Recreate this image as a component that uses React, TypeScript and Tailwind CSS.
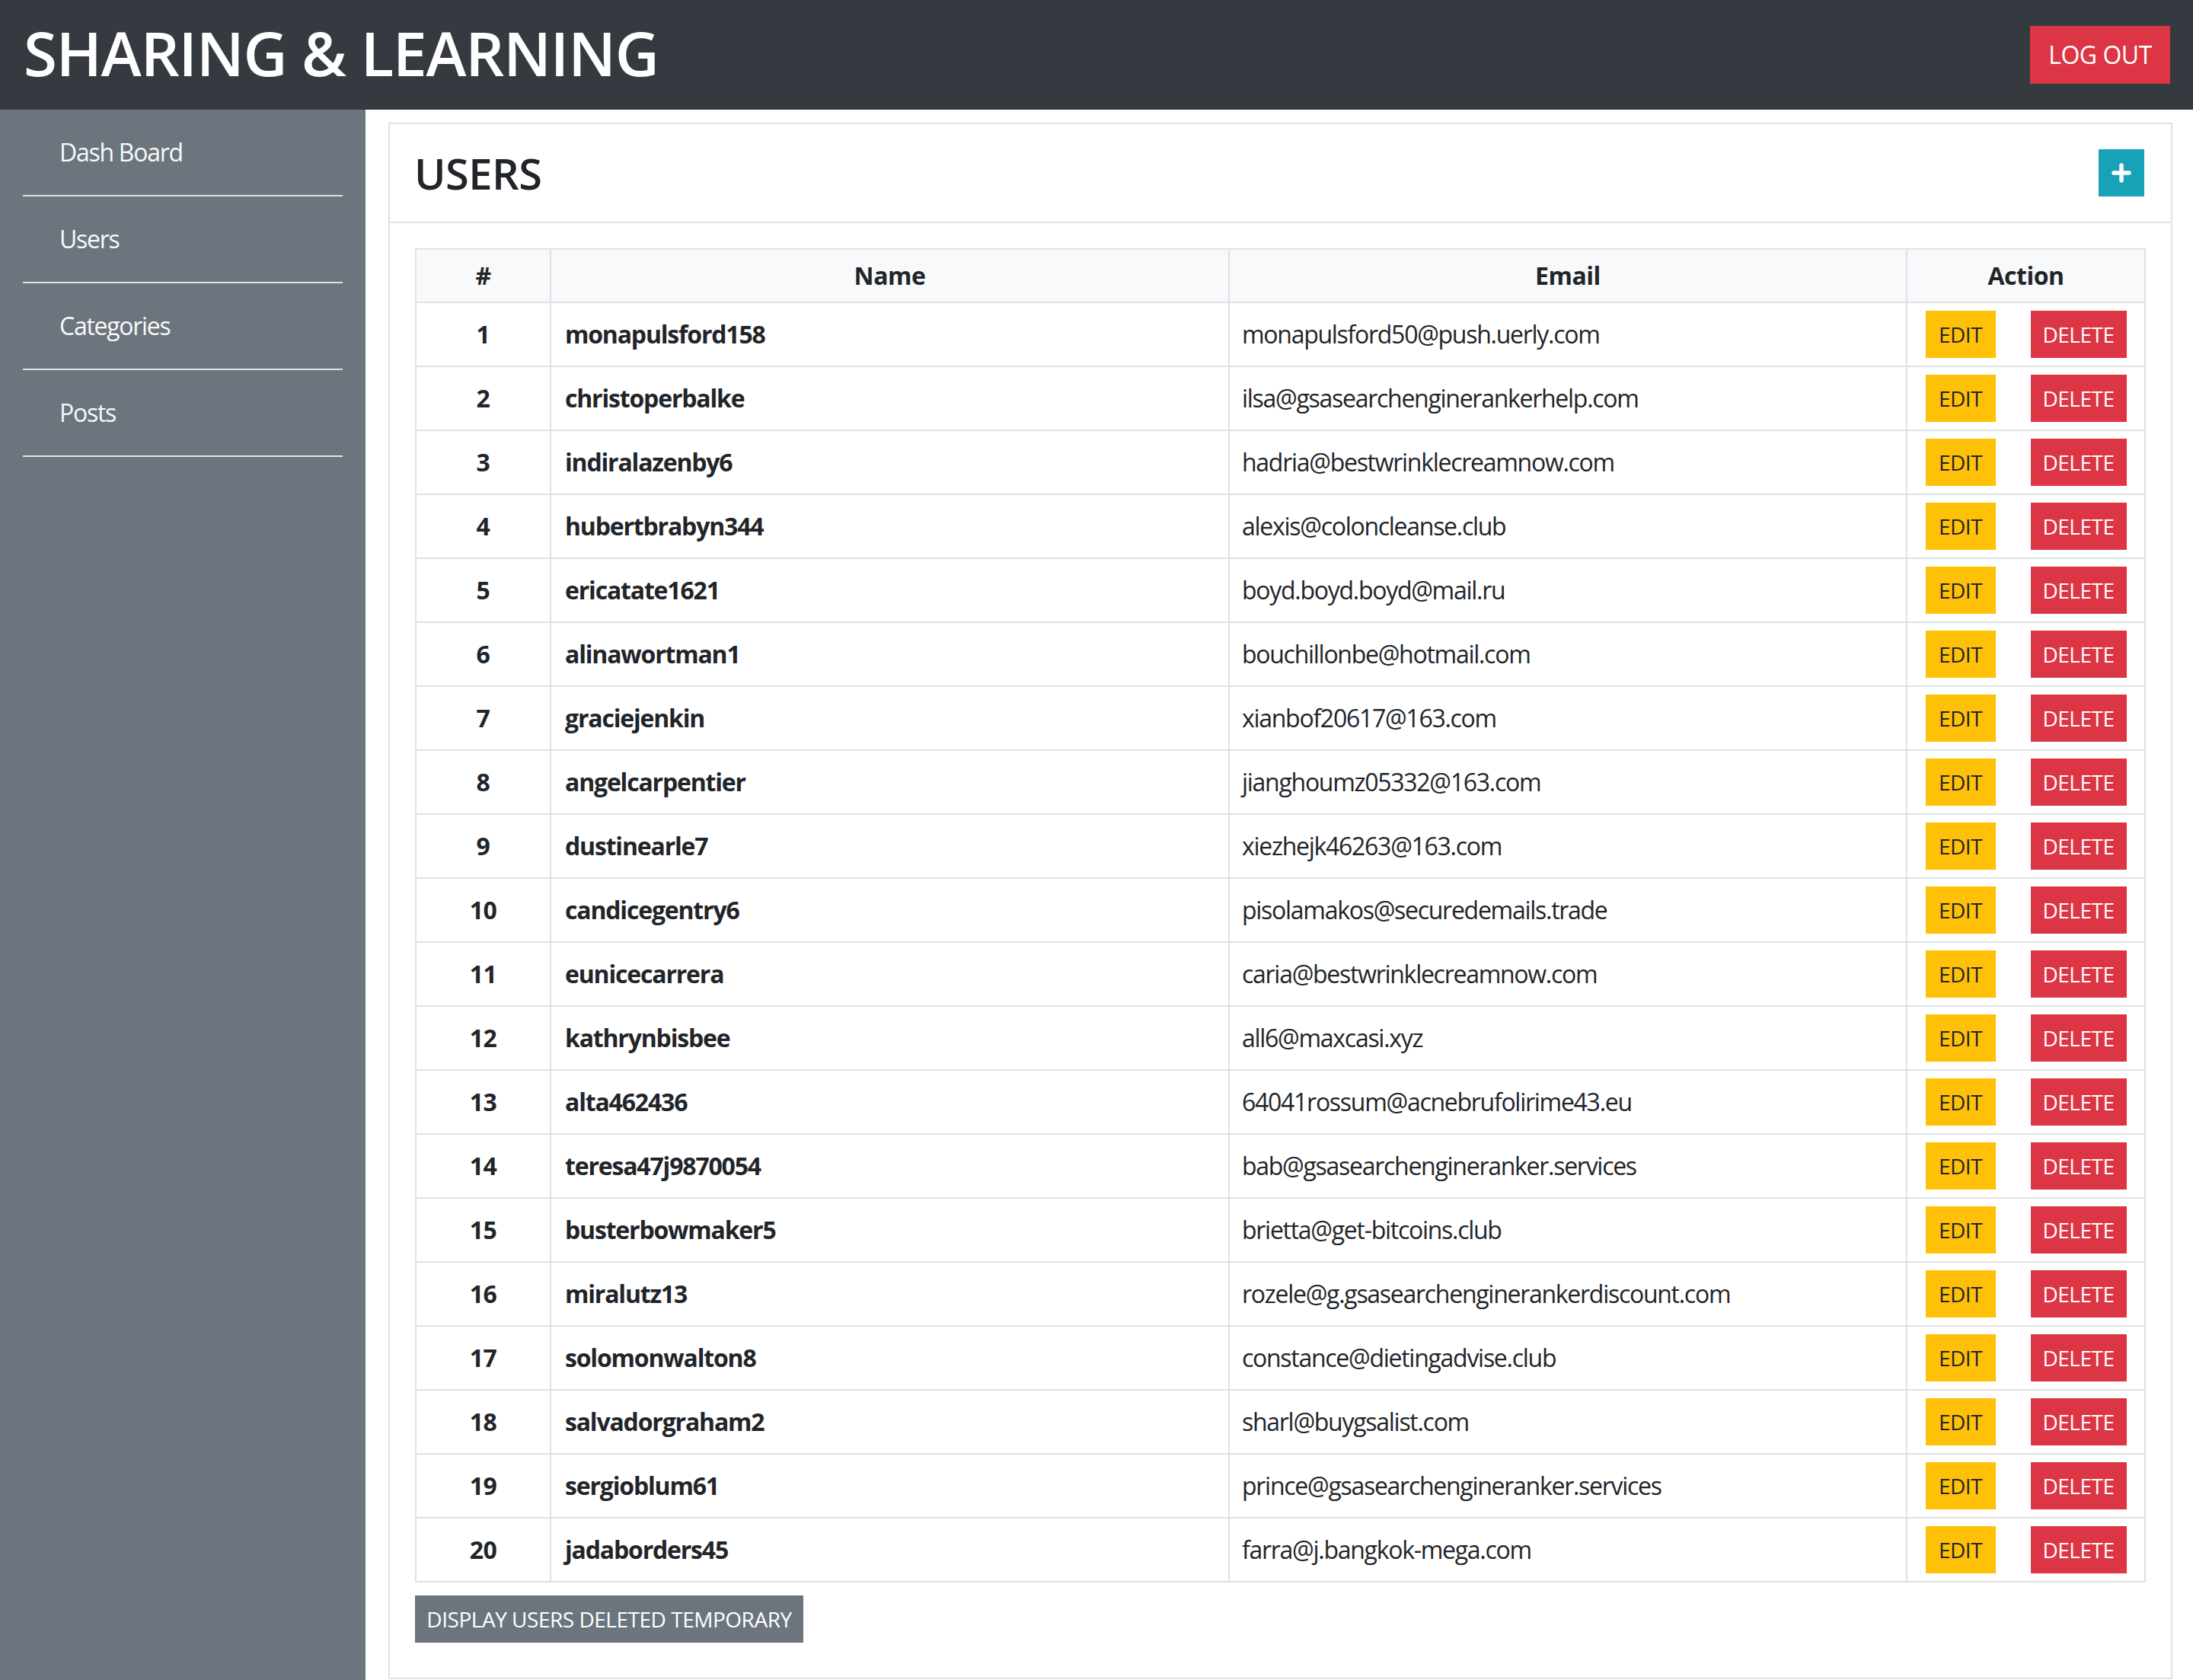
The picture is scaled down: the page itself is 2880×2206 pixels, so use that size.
import React from "react";

const users: [string, string][] = [
  ["monapulsford158", "monapulsford50@push.uerly.com"],
  ["christoperbalke", "ilsa@gsasearchenginerankerhelp.com"],
  ["indiralazenby6", "hadria@bestwrinklecreamnow.com"],
  ["hubertbrabyn344", "alexis@coloncleanse.club"],
  ["ericatate1621", "boyd.boyd.boyd@mail.ru"],
  ["alinawortman1", "bouchillonbe@hotmail.com"],
  ["graciejenkin", "xianbof20617@163.com"],
  ["angelcarpentier", "jianghoumz05332@163.com"],
  ["dustinearle7", "xiezhejk46263@163.com"],
  ["candicegentry6", "pisolamakos@securedemails.trade"],
  ["eunicecarrera", "caria@bestwrinklecreamnow.com"],
  ["kathrynbisbee", "all6@maxcasi.xyz"],
  ["alta462436", "64041rossum@acnebrufolirime43.eu"],
  ["teresa47j9870054", "bab@gsasearchengineranker.services"],
  ["busterbowmaker5", "brietta@get-bitcoins.club"],
  ["miralutz13", "rozele@g.gsasearchenginerankerdiscount.com"],
  ["solomonwalton8", "constance@dietingadvise.club"],
  ["salvadorgraham2", "sharl@buygsalist.com"],
  ["sergioblum61", "prince@gsasearchengineranker.services"],
  ["jadaborders45", "farra@j.bangkok-mega.com"],
];

const nav = ["Dash Board", "Users", "Categories", "Posts"];

export default function App() {
  return (
    <div className="h-[2206px] w-[2880px] overflow-hidden bg-white font-['Open_Sans','Noto_Sans',sans-serif] tracking-[-0.03em] text-[#212529]">
      <header className="flex h-[144px] items-center justify-between bg-[#343a40] pl-[31px] pr-[30px]">
        <h1 className="mb-[6px] text-[80px] font-semibold leading-none tracking-[-0.014em] text-white">
          SHARING &amp; LEARNING
        </h1>
        <button className="flex h-[76px] w-[184px] items-center justify-center bg-[#dc3545] text-[32px] leading-none text-white">
          LOG OUT
        </button>
      </header>
      <div className="flex h-[2062px]">
        <aside className="w-[480px] shrink-0 bg-[#6c757d] px-[30px]">
          {nav.map((n) => (
            <div
              key={n}
              className="flex h-[114px] items-center border-b-2 border-[#dee2e6] pl-[48px] text-[32px] tracking-[-0.04em] text-[#f8f9fa]"
            >
              {n}
            </div>
          ))}
        </aside>
        <main className="flex-1 px-[30px] pt-[17px]">
          <div className="border-2 border-[#dee2e6] bg-white">
            <div className="flex h-[130px] items-center justify-between border-b-2 border-[#dee2e6] pl-[32px] pr-[35px]">
              <h3 className="text-[56px] font-semibold leading-none tracking-[-0.01em]">USERS</h3>
              <button className="flex h-[62px] w-[60px] items-center justify-center bg-[#17a2b8]">
                <svg width="26" height="26" viewBox="0 0 26 26">
                  <path d="M13 3v20M3 13h20" stroke="white" strokeWidth="5.5" strokeLinecap="round" fill="none" />
                </svg>
              </button>
            </div>
            <div className="px-[33px] pb-[46px] pt-[33px]">
              <table className="w-full table-fixed border-collapse text-[32px]">
                <colgroup>
                  <col className="w-[177px]" />
                  <col className="w-[891px]" />
                  <col className="w-[890px]" />
                  <col className="w-[313px]" />
                </colgroup>
                <thead>
                  <tr className="h-[70px] bg-[#f8f9fa]">
                    <th className="border-2 border-[#dee2e6] text-center font-bold">#</th>
                    <th className="border-2 border-[#dee2e6] text-center font-bold">Name</th>
                    <th className="border-2 border-[#dee2e6] text-center font-bold">Email</th>
                    <th className="border-2 border-[#dee2e6] text-center font-bold">Action</th>
                  </tr>
                </thead>
                <tbody>
                  {users.map(([name, email], i) => (
                    <tr key={name} className="h-[84px]">
                      <td className="border-2 border-[#dee2e6] text-center font-bold">{i + 1}</td>
                      <td className="border-2 border-[#dee2e6] px-[18px] font-bold tracking-[-0.037em]">{name}</td>
                      <td className="border-2 border-[#dee2e6] px-[16px] tracking-[-0.04em]">{email}</td>
                      <td className="border-2 border-[#dee2e6]">
                        <div className="flex justify-center gap-[46px]">
                          <button className="flex h-[62px] w-[92px] items-center justify-center bg-[#ffc107] text-[28px] text-[#212529]">
                            EDIT
                          </button>
                          <button className="flex h-[62px] w-[126px] items-center justify-center bg-[#dc3545] text-[28px] text-white">
                            DELETE
                          </button>
                        </div>
                      </td>
                    </tr>
                  ))}
                </tbody>
              </table>
              <button className="mt-[17px] flex h-[62px] w-[510px] items-center justify-center bg-[#6c757d] text-[28px] text-white">
                DISPLAY USERS DELETED TEMPORARY
              </button>
            </div>
          </div>
        </main>
      </div>
    </div>
  );
}
